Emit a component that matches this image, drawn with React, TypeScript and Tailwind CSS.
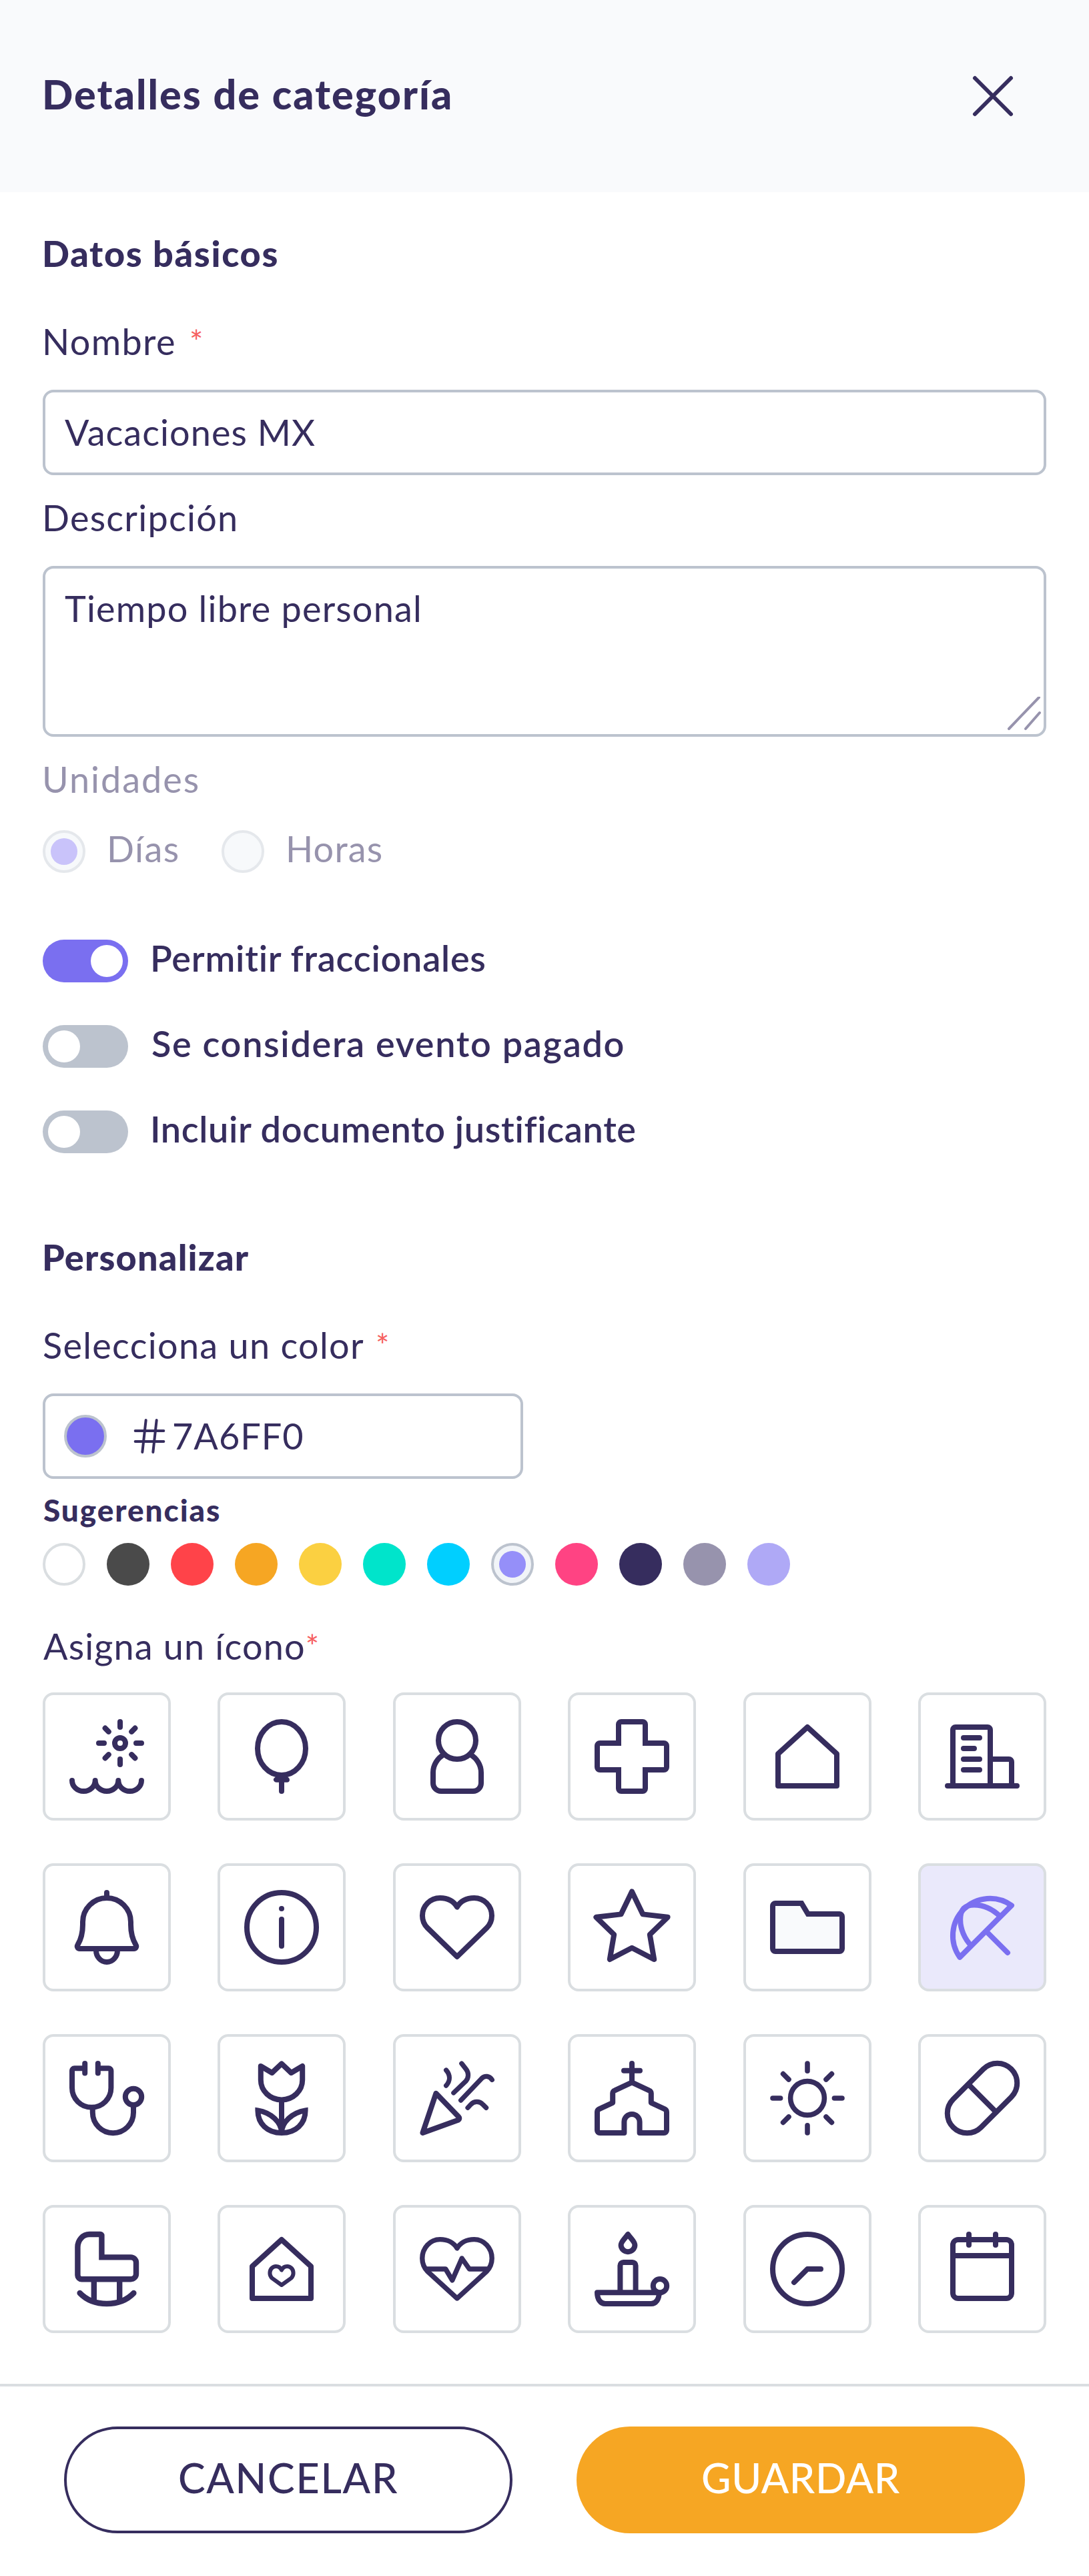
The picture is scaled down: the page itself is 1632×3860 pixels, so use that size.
import { useState, type ReactNode } from 'react'
import { Hash } from 'lucide-react'

const icons: { name: string; art: ReactNode }[] = [
  {
    name: 'Playa',
    art: (
      <>
        <circle cx="21" cy="11" r="2" />
        <path d="M21 3v2M21 17v2M13 11h2M27 11h2M15.4 5.4l1.3 1.3M25.3 15.3l1.3 1.3M26.6 5.4l-1.3 1.3M16.7 15.3l-1.3 1.3" />
        <path d="M3 25a4.33 4 0 0 0 8.67 0a4.33 4 0 0 0 8.66 0a4.33 4 0 0 0 8.67 0" />
      </>
    ),
  },
  {
    name: 'Globo',
    art: (
      <>
        <ellipse cx="16" cy="13" rx="9" ry="10" />
        <path d="M16 23.4L14 24.7h4zM16 24v5" />
      </>
    ),
  },
  {
    name: 'Persona',
    art: (
      <>
        <circle cx="16" cy="10" r="7" />
        <path d="M11.2 15.2C8.6 16.6 7 19.2 7 22v4a3 3 0 0 0 3 3h12a3 3 0 0 0 3-3v-4c0-2.8-1.6-5.4-4.2-6.8" />
      </>
    ),
  },
  {
    name: 'Salud',
    art: (
      <path d="M11 4a1 1 0 0 1 1-1h8a1 1 0 0 1 1 1v7h7a1 1 0 0 1 1 1v8a1 1 0 0 1-1 1h-7v7a1 1 0 0 1-1 1h-8a1 1 0 0 1-1-1v-7H4a1 1 0 0 1-1-1v-8a1 1 0 0 1 1-1h7z" strokeLinejoin="miter" />
    ),
  },
  { name: 'Casa', art: <path d="M16 5L27 15V27H5V15z" /> },
  {
    name: 'Oficina',
    art: (
      <>
        <path d="M3 27h26M5 27V6a1 1 0 0 1 1-1h12a1 1 0 0 1 1 1v21M19 17h7a1 1 0 0 1 1 1v9" />
        <path d="M9 9h6M9 13h4M9 17h6M9 21h6" />
      </>
    ),
  },
  {
    name: 'Campana',
    art: (
      <>
        <path d="M16 5a9 9 0 0 0-9 9v1c0 3.2-.7 5.6-1.9 7.6a.9.9 0 0 0 .8 1.4h20.2a.9.9 0 0 0 .8-1.4C25.7 20.6 25 18.2 25 15v-1a9 9 0 0 0-9-9z" />
        <path d="M16 3v2M12 24.6a4 4.4 0 0 0 8 0" />
      </>
    ),
  },
  {
    name: 'Información',
    art: (
      <>
        <circle cx="16" cy="16" r="13" />
        <path d="M16 9v.01M16 13v10" />
      </>
    ),
  },
  {
    name: 'Corazón',
    art: <path d="M16 8.4C14.8 6.3 12.5 5 9.6 5C5.9 5 3 8 3 11.6C3 13.4 3.7 15 4.9 16.2L16 27L27.1 16.2C28.3 15 29 13.4 29 11.6C29 8 26.1 5 22.4 5C19.5 5 17.2 6.3 16 8.4z" />,
  },
  {
    name: 'Estrella',
    art: <path d="M16 2.6L20.1 11.1L29.4 12.2L22.7 18.7L24.3 28L16 23.7L7.7 28L9.3 18.7L2.6 12.2L11.9 11.1z" />,
  },
  {
    name: 'Carpeta',
    art: <path fill="#f9fafc" strokeLinejoin="miter" d="M3 8a1 1 0 0 1 1-1h9.8l2.4 4H28a1 1 0 0 1 1 1v12a1 1 0 0 1-1 1H4a1 1 0 0 1-1-1z" />,
  },
  {
    name: 'Sombrilla',
    art: (
      <>
        <path d="M7.6 27.2A13.9 13.9 0 0 1 27 7.8z" />
        <path d="M11.8 22.8C9.4 20.3 7.8 16.7 7.8 13.2C7.8 9.2 9.4 7.6 13 7.6C16.6 7.6 20.1 9.4 22.6 11.8" />
        <path d="M18 18l7.5 7.5" />
      </>
    ),
  },
  {
    name: 'Estetoscopio',
    art: (
      <>
        <path d="M7.8 4.8H3.9a.9.9 0 0 0-.9.9v6.45a7.3 7.3 0 0 0 14.6 0V5.7a.9.9 0 0 0-.9-.9h-4M7.8 3v3.6M12.7 3v3.6" />
        <path d="M10.7 19.5v1.9a7.65 7.65 0 0 0 15.3 0v-2.8" />
        <circle cx="26" cy="15.5" r="3.05" />
      </>
    ),
  },
  {
    name: 'Flor',
    art: (
      <>
        <path d="M8.2 4L12.4 6.5L16 3.1L19.6 6.5L23.8 4V9.2a7.8 7.4 0 0 1-15.6 0z" />
        <path d="M16 16.8V28.8" />
        <path strokeLinejoin="miter" strokeLinecap="butt" d="M7.1 20.6C12 21.4 16 25 16 29C10.6 29 7.1 25.5 7.1 20.6zM24.9 20.6C20 21.4 16 25 16 29C21.4 29 24.9 25.5 24.9 20.6z" />
      </>
    ),
  },
  {
    name: 'Fiesta',
    art: (
      <>
        <path d="M8.1 14.2L16.6 23c.4.4.3.9-.2 1.2L3.1 29z" />
        <path strokeWidth="1.8" d="M11.9 5.5c1.6 1.8 1.6 4 0 5.8M17.7 3l1.7 2.2c1 1.3 1 3.1-.1 4.4L14.7 14M17.4 16.8L25.2 8.6c1.2-1.2 2.9-1 3.9.5M20 19.6l1.1-1.2c1.3-1.4 3.3-1.4 4.6 0l1.2 1.2" />
      </>
    ),
  },
  {
    name: 'Iglesia',
    art: (
      <>
        <path d="M16 3v7M13 5.7h6" />
        <path d="M16 10.1l6.4 3c.5.2.8.6.8 1.1v3.5l5.1 2.4c.4.2.7.6.7 1.1V28a1 1 0 0 1-1 1h-9.1v-4.1a2.9 2.9 0 0 0-5.8 0V29H4a1 1 0 0 1-1-1v-6.8c0-.5.3-.9.7-1.1l5.1-2.4v-3.5c0-.5.3-.9.8-1.1z" />
      </>
    ),
  },
  {
    name: 'Sol',
    art: (
      <g strokeWidth="1.9">
        <circle cx="16" cy="16" r="6.35" />
        <path d="M16 3v2.8M16 26.2V29M3 16h2.9M26.1 16H29M6.9 6.9l2.1 2.1M25.1 6.9L23 9M9 23l-2.1 2.1M23 23l2.1 2.1" />
      </g>
    ),
  },
  {
    name: 'Medicina',
    art: (
      <>
        <rect x=".6" y="8.6" width="30.8" height="14.8" rx="7.4" transform="rotate(-45 16 16)" />
        <path d="M10.8 10.8l10.4 10.4" />
      </>
    ),
  },
  {
    name: 'Mecedora',
    art: (
      <g strokeWidth="2.1">
        <path d="M9.5 3h4.1a.5.5 0 0 1 .5.5v8.1H25a2 2 0 0 1 2 2v4.2a2 2 0 0 1-2 2H6.6a1.5 1.5 0 0 1-1.5-1.5V7.8C5.1 5.1 7.1 3 9.5 3zM11.2 20v8M20.8 20v8" strokeLinejoin="miter" />
        <path d="M5.9 25c2.5 2.6 6.1 4 10.1 4s7.6-1.4 10.1-4" />
      </g>
    ),
  },
  {
    name: 'Hogar',
    art: (
      <>
        <path d="M16 5L27 15V27H5V15z" />
        <path strokeWidth="1.5" d="M16 16.4C15.6 15.5 14.8 15 13.9 15C12.6 15 11.6 16.1 11.6 17.5C11.6 18.3 11.9 18.9 12.4 19.4L16 22L19.6 19.4C20.1 18.9 20.4 18.3 20.4 17.5C20.4 16.1 19.4 15 18.1 15C17.2 15 16.4 15.5 16 16.4z" />
      </>
    ),
  },
  {
    name: 'Pulso',
    art: (
      <g strokeWidth="1.85">
        <path d="M16 8.2C14.8 6.2 12.5 4.9 9.6 4.9C5.9 4.9 2.95 8.1 2.95 12C2.95 13.8 3.7 15.6 4.9 16.9L16 27L27.1 16.9C28.3 15.6 29.05 13.8 29.05 12C29.05 8.1 26.1 4.9 22.4 4.9C19.5 4.9 17.2 6.2 16 8.2z" />
        <path d="M4.4 16h7.3l2.5 4.2L17.8 12l2.8 4h7" />
      </g>
    ),
  },
  {
    name: 'Vela',
    art: (
      <>
        <path d="M14.5 3C13.4 4.6 11.9 5.7 11.9 7a2.6 2.55 0 0 0 5.2 0C17.1 5.7 15.6 4.6 14.5 3z" />
        <path d="M11.6 24.6V14.7a1.2 1.2 0 0 1 1.2-1.2h3.4a1.2 1.2 0 0 1 1.2 1.2v9.9M3 24.8h23.2c0 2.5-1.2 4.2-3 4.2H6c-1.8 0-3-1.7-3-4.2z" />
        <circle cx="26.5" cy="22.3" r="2.55" />
      </>
    ),
  },
  {
    name: 'Reloj',
    art: (
      <>
        <circle cx="16" cy="16" r="13" />
        <path d="M11 21l5-5h5" />
      </>
    ),
  },
  {
    name: 'Calendario',
    art: (
      <>
        <rect x="5" y="5" width="22" height="22" rx="2" />
        <path d="M5 11h22M11 3v4M21 3v4" />
      </>
    ),
  },
]

const swatches = [
  'bg-white border-4 border-[#dadee1]',
  'bg-[#4a4a4a]',
  'bg-[#ff4349]',
  'bg-[#f6a623]',
  'bg-[#fbd041]',
  'bg-[#00e4cb]',
  'bg-[#00cfff]',
  'bg-[#958ff9]',
  'bg-[#ff4383]',
  'bg-[#362d5e]',
  'bg-[#9793ad]',
  'bg-[#afa9f6]',
]

const toggles = [
  { label: 'Permitir fraccionales', on: true, style: 'ml-[33px] tracking-[0.75px]' },
  { label: 'Se considera evento pagado', on: false, style: 'ml-[35px] tracking-[1.68px]' },
  { label: 'Incluir documento justificante', on: false, style: 'ml-[33px] tracking-[0.65px]' },
]

const Required = ({ className }: { className: string }) => (
  <span className={`text-[48px] tracking-normal text-[#f66060] ${className}`}>*</span>
)

function Radio({ checked }: { checked?: boolean }) {
  return (
    <span className="flex size-16 items-center justify-center rounded-full border-4 border-[#e5e8ec] bg-[#f7f9fb]">
      {checked && <span className="size-10 rounded-full bg-[#c9c3fa]" />}
    </span>
  )
}

export default function App() {
  const [selected, setSelected] = useState('Sombrilla')
  const [flags, setFlags] = useState(toggles.map((t) => t.on))

  return (
    <div className="flex h-[3860px] w-[1632px] flex-col bg-white font-['Lato',sans-serif] text-[54px] leading-[56px] text-[#362d5e]">
      <header className="flex h-72 shrink-0 items-center justify-between bg-[#f9fafc] pr-[112px] pl-[63px]">
        <h1 className="pb-1.5 text-[61px] leading-[64px] font-black tracking-[2.07px]">Detalles de categoría</h1>
        <button aria-label="Cerrar" className="size-16">
          <svg viewBox="0 0 64 64" className="size-16" fill="none" stroke="currentColor" strokeWidth="6" strokeLinecap="round">
            <path d="M5 5l54 54M59 5L5 59" />
          </svg>
        </button>
      </header>

      <main className="flex flex-col px-16 pt-16">
        <h2 className="-ml-px font-black tracking-[1.7px]">Datos básicos</h2>

        <label className="mt-[76px] flex tracking-[1.36px]">
          <span className="-ml-px">Nombre</span>
          <Required className="ml-5" />
        </label>
        <div className="mt-11 flex h-32 items-center rounded-2xl border-4 border-[#bcc3ce] pl-[29px] tracking-[1.05px]">Vacaciones MX</div>

        <label className="mt-9 -ml-px tracking-[1.24px]">Descripción</label>
        <div className="relative mt-11 h-64 rounded-2xl border-4 border-[#bcc3ce] pt-8 pl-[29px] tracking-[1.18px]">
          Tiempo libre personal
          <svg viewBox="0 0 52 52" className="absolute right-1 bottom-1 size-[52px]" fill="none" stroke="#9793ad" strokeWidth="4" strokeLinecap="round">
            <path d="M4 48L49 1M29 48L50 24" />
          </svg>
        </div>

        <div className="mt-9 -ml-px tracking-[2px] text-[#9793ad]">Unidades</div>
        <div className="mt-12 flex text-[#9793ad]">
          <label className="flex w-[268px] items-center gap-8">
            <Radio checked />
            <span className="pb-2 tracking-[1.5px]">Días</span>
          </label>
          <label className="flex items-center gap-8">
            <Radio />
            <span className="pb-2 tracking-[1.2px]">Horas</span>
          </label>
        </div>

        <div className="mt-25 flex flex-col gap-16">
          {toggles.map((t, i) => (
            <div key={t.label} className="flex h-16 items-center">
              <button
                role="switch"
                aria-checked={flags[i]}
                aria-label={t.label}
                onClick={() => setFlags(flags.map((f, j) => (j === i ? !f : f)))}
                className={`flex h-16 w-32 items-center rounded-full px-2 ${flags[i] ? 'justify-end bg-[#7a6ff0]' : 'justify-start bg-[#bcc3ce]'}`}
              >
                <span className="size-12 rounded-full bg-white" />
              </button>
              <span className={`pb-2 font-semibold ${t.style}`}>{t.label}</span>
            </div>
          ))}
        </div>

        <h2 className="mt-32 -ml-px font-black tracking-[1.2px]">Personalizar</h2>

        <label className="mt-[76px] flex tracking-[1.29px]">
          <span>Selecciona un color</span>
          <Required className="ml-[17px]" />
        </label>
        <div className="mt-11 flex h-32 w-[720px] items-center rounded-2xl border-4 border-[#bcc3ce] pl-7">
          <span className="size-16 rounded-full border-4 border-[#bcc3ce] bg-[#7a6ff0]" />
          <Hash className="ml-8 size-16" strokeWidth={1.5} />
          <span className="ml-0.5 tracking-[1px]">7A6FF0</span>
        </div>

        <h3 className="mt-[23px] ml-px text-[46px] leading-[48px] font-black tracking-[1.9px]">Sugerencias</h3>
        <div className="mt-[25px] flex gap-8">
          {swatches.map((s, i) =>
            i === 7 ? (
              <span key={s} className="flex size-16 items-center justify-center rounded-full border-4 border-[#bcc3ce] bg-[#f1f4f8]">
                <span className={`size-10 rounded-full ${s}`} />
              </span>
            ) : (
              <span key={s} className={`size-16 rounded-full ${s}`} />
            ),
          )}
        </div>

        <label className="mt-[63px] flex tracking-[1.15px]">
          <span className="ml-px">Asigna un ícono</span>
          <Required className="" />
        </label>
        <div className="mt-[41px] grid grid-cols-[repeat(6,192px)] justify-between gap-y-16">
          {icons.map(({ name, art }) => (
            <button
              key={name}
              aria-label={name}
              onClick={() => setSelected(name)}
              className={`flex size-48 items-center justify-center rounded-2xl border-4 border-[#dadee1] ${selected === name ? 'bg-[#eae9fb] text-[#7a6ff0]' : 'bg-white'}`}
            >
              <svg viewBox="0 0 32 32" className="size-32" fill="none" stroke="currentColor" strokeWidth="2" strokeLinecap="round" strokeLinejoin="round">
                {art}
              </svg>
            </button>
          ))}
        </div>
      </main>

      <footer className="mt-auto flex h-72 shrink-0 items-center justify-between border-t-4 border-[#dadee1] px-24 pb-1 text-[61px] leading-[64px] font-medium">
        <button className="h-40 w-[672px] rounded-full border-4 border-[#362d5e] pb-1.5 tracking-[1.75px]">CANCELAR</button>
        <button className="h-40 w-[672px] rounded-full bg-[#f6a623] pb-1.5 tracking-[0.6px] text-white">GUARDAR</button>
      </footer>
    </div>
  )
}
